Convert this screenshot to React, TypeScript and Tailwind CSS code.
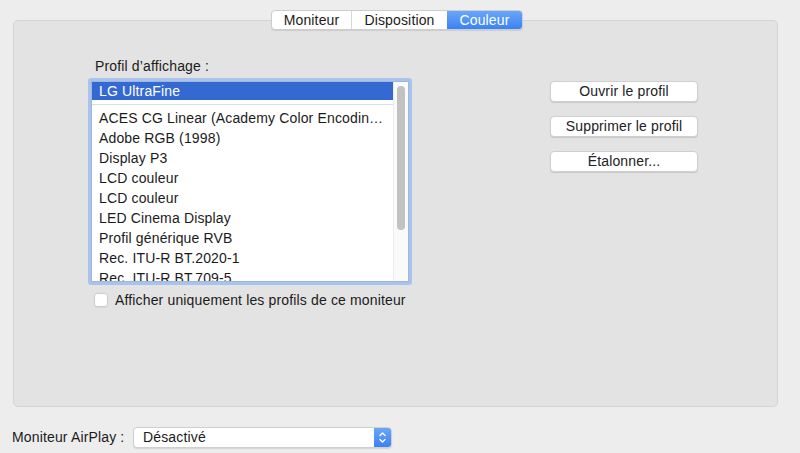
import React from "react";

const profiles = [
  "ACES CG Linear (Academy Color Encoding System AP1)",
  "Adobe RGB (1998)",
  "Display P3",
  "LCD couleur",
  "LCD couleur",
  "LED Cinema Display",
  "Profil générique RVB",
  "Rec. ITU-R BT.2020-1",
  "Rec. ITU-R BT.709-5",
];

function MacButton({ children }: { children: React.ReactNode }) {
  return (
    <div className="h-[21px] w-[148px] rounded-[4px] bg-white border border-[#cfcfcf] shadow-[0_1px_1px_rgba(0,0,0,0.12)] flex items-center justify-center text-[14px] text-[#222]">
      {children}
    </div>
  );
}

export default function App() {
  return (
    <div
      className="w-[800px] h-[453px] bg-[#ededed] pt-[10px] overflow-hidden text-[#1b1b1b] tracking-[0.15px]"
      style={{ fontFamily: '"Liberation Sans", Arial, sans-serif' }}
    >
      {/* Tabs */}
      <div className="relative z-10 -mb-[10px] flex pl-[271px]">
        <div className="flex h-[20px] rounded-[4px] bg-white border border-[#cdcdcd] shadow-[0_1px_1px_rgba(0,0,0,0.1)] text-[14px] overflow-hidden">
          <div className="w-[80px] flex items-center justify-center border-r border-[#d8d8d8]">Moniteur</div>
          <div className="w-[95px] flex items-center justify-center">Disposition</div>
          <div className="w-[75px] flex items-center justify-center text-white bg-gradient-to-b from-[#6aa6f8] to-[#3a82f4]">Couleur</div>
        </div>
      </div>

      {/* Panel */}
      <div className="ml-[13px] w-[765px] h-[387px] rounded-[5px] bg-[#e3e3e3] border border-[#d5d5d5] flex pl-[74px]">
        {/* Left column */}
        <div className="pt-[37px] w-[324px] flex flex-col">
          <div className="ml-[7px] text-[14px] leading-[17px] mb-[3px]">Profil d’affichage :</div>
          <div className="h-[207px] w-[324px] rounded-[3px] border-[3px] border-[#a9c4ec] bg-white">
            <div className="h-full w-full border border-[#9fb6d8] bg-white flex overflow-hidden">
              <div className="flex-1 min-w-0 overflow-hidden">
                <div className="h-[18px] bg-[#3569d2] text-white text-[14px] leading-[18px] pl-[7px]">LG UltraFine</div>
                <div className="h-[8px] flex items-center">
                  <div className="w-full h-px bg-[#dedede]" />
                </div>
                {profiles.map((p, i) => (
                  <div key={i} className="h-[20px] text-[14px] leading-[20px] pl-[7px] pr-[4px] truncate">
                    {p}
                  </div>
                ))}
              </div>
              <div className="w-[15px] shrink-0 border-l border-[#ececec] bg-[#fafafa] pt-[4px] flex justify-center">
                <div className="w-[8px] h-[144px] rounded-full bg-[#c2c2c2]" />
              </div>
            </div>
          </div>
          <div className="mt-[7px] ml-[6px] flex items-center gap-[7px]">
            <div className="w-[14px] h-[14px] rounded-[3px] bg-white border border-[#cccccc] shadow-[0_1px_1px_rgba(0,0,0,0.06)]" />
            <span className="text-[14px] leading-[16px]">Afficher uniquement les profils de ce moniteur</span>
          </div>
        </div>

        {/* Right column */}
        <div className="ml-[138px] pt-[60px] flex flex-col gap-[14px]">
          <MacButton>Ouvrir le profil</MacButton>
          <MacButton>Supprimer le profil</MacButton>
          <MacButton>Étalonner...</MacButton>
        </div>
      </div>

      {/* Bottom row */}
      <div className="mt-[20px] ml-[12px] flex items-center h-[20px]">
        <span className="text-[14px] w-[121px]">Moniteur AirPlay :</span>
        <div className="h-[21px] w-[259px] rounded-[4px] bg-white border border-[#cfcfcf] shadow-[0_1px_1px_rgba(0,0,0,0.1)] flex items-center overflow-hidden">
          <span className="flex-1 pl-[9px] text-[14px]">Désactivé</span>
          <div className="w-[17px] h-full bg-gradient-to-b from-[#6aa6f8] to-[#3a82f4] flex items-center justify-center">
            <svg width="9" height="13" viewBox="0 0 9 13" fill="none" stroke="white" strokeWidth="1.4" strokeLinecap="round" strokeLinejoin="round">
              <path d="M2 4.5 L4.5 2 L7 4.5" />
              <path d="M2 8.5 L4.5 11 L7 8.5" />
            </svg>
          </div>
        </div>
      </div>
    </div>
  );
}
